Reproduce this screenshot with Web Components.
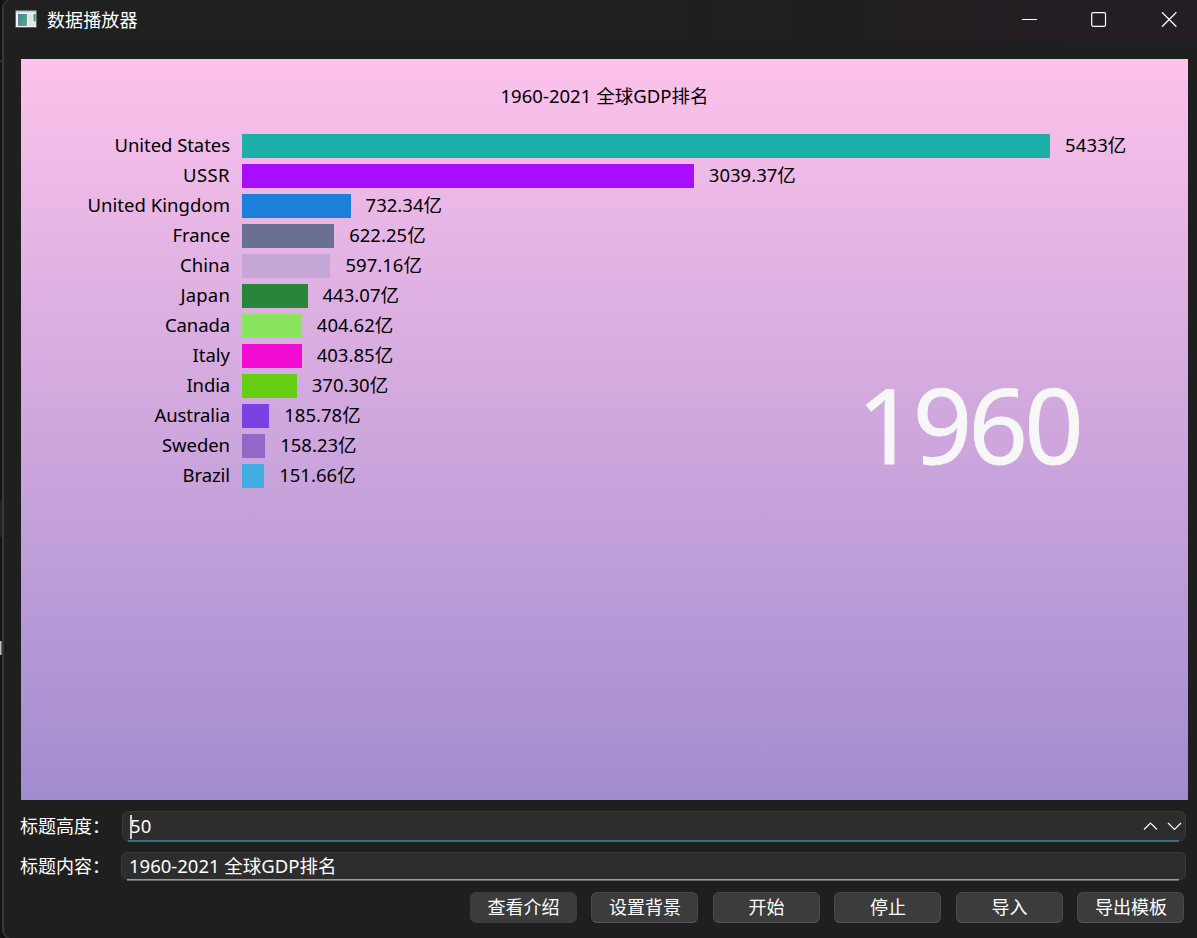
<!DOCTYPE html>
<html lang="zh-CN">
<head>
<meta charset="utf-8">
<title>数据播放器</title>
<style>
html, body { margin: 0; height: 100%; background: #141414; overflow: hidden; }
body { font: 18px/24px "Noto Sans", "Noto Sans CJK SC", sans-serif; color: #fff; }
</style>
</head>
<body>
<player-window></player-window>
<script>
const define = (name, html, setup) => customElements.define(name, class extends HTMLElement {
  constructor() {
    super();
    this.attachShadow({ mode: 'open' });
  }
  connectedCallback() {
    this.shadowRoot.innerHTML = typeof html === 'function' ? html(this) : html;
    if (setup) setup(this);
  }
});

/* Text set to a given advance width by adjusting its tracking. */
define('fit-text', el => `<style>
  :host { display: inline-block; white-space: pre; }
  </style><span>${el.getAttribute('text')}</span>`, el => {
  const s = el.shadowRoot.querySelector('span');
  const want = parseFloat(el.getAttribute('w'));
  if (want) {
    const natural = s.getBoundingClientRect().width;
    s.style.letterSpacing = ((want - natural) / [...el.getAttribute('text')].length) + 'px';
  }
});

define('title-bar', `<style>
  :host { display: flex; align-items: center; height: 42px; padding-left: 11px; box-sizing: border-box;
    background: linear-gradient(90deg, #202020 0 52%, #211e20 70%, #251e25 90%); }
  .icon { width: 22px; height: 18px; margin: -5px 10px 0 0; }
  fit-text { margin-top: -2px; }
  .ctl { display: flex; margin-left: auto; margin-top: -3px; padding-right: 20px; gap: 54px; }
  svg { display: block; }
  </style>
  <svg class="icon" viewBox="0 0 22 18">
    <defs><linearGradient id="g" x1="0" y1="0" x2="1" y2="1"><stop stop-color="#4b7aa8"/><stop offset="1" stop-color="#55b277"/></linearGradient></defs>
    <rect x=".3" y=".2" width="21.4" height="17.4" fill="#7c858e"/>
    <rect x="1" y="1" width="20" height="16" fill="#f2f4f5"/>
    <rect x="1" y="1" width="20" height="1.4" fill="#b8cddc"/>
    <rect x="3" y="4" width="9" height="12" fill="url(#g)"/>
    <rect x="13" y="4" width="4.6" height="7.5" fill="#e0e2e3"/>
    <rect x="18.5" y="4" width="2.3" height="7.5" fill="url(#g)"/>
    <rect x="13" y="12.5" width="8" height="3.5" fill="#e4e6e6"/>
  </svg>
  <fit-text text="数据播放器" w="90.5"></fit-text>
  <div class="ctl">
    <svg width="15" height="15"><path d="M0 7.5h15" stroke="#fff"/></svg>
    <svg width="16" height="15"><rect x=".7" y=".7" width="13.8" height="13.6" rx="1.2" fill="none" stroke="#fff" stroke-width="1.2"/></svg>
    <svg width="16" height="15"><path d="M1 .3l14.4 14.4M15.400 .3L1 14.700" stroke="#fff" stroke-width="1.3"/></svg>
  </div>`);

define('chart-row', el => `<style>
  :host { display: flex; height: 24px; align-items: center; color: #000; font-size: 18.5px; }
  .name { width: 209px; text-align: right; margin-right: 11.600px; white-space: nowrap; }
  .bar { height: 24px; background: ${el.getAttribute('color')}; width: ${el.getAttribute('value') * 0.1488}px; margin-right: 15px; }
  fit-text { transform: translateY(-1px); }
  </style>
  <span class="name"><fit-text text="${el.getAttribute('name')}" w="${el.getAttribute('nw')}"></fit-text></span>
  <span class="bar"></span>
  <fit-text text="${el.getAttribute('value')}亿" w="${el.getAttribute('vw')}"></fit-text>`);

const rows = [
  ['United States', '5433', '#1cb0a9', 115.5, 61.5],
  ['USSR', '3039.37', '#a80dff', 47, 87],
  ['United Kingdom', '732.34', '#1c7fd9', 142.5, 76.5],
  ['France', '622.25', '#6a7093', 57.5, 76.5],
  ['China', '597.16', '#c6a8d8', 50, 76.5],
  ['Japan', '443.07', '#28863b', 49.5, 76.5],
  ['Canada', '404.62', '#8ae45f', 65, 76.5],
  ['Italy', '403.85', '#f20bd3', 37.5, 76.5],
  ['India', '370.30', '#65cd12', 43.5, 76.5],
  ['Australia', '185.78', '#7b41e1', 75.5, 76.5],
  ['Sweden', '158.23', '#9267c7', 68, 76.5],
  ['Brazil', '151.66', '#40aee1', 47.5, 76.5],
];

define('race-chart', `<style>
  :host { display: block; position: relative; height: 741px; box-sizing: border-box; padding-top: 25px;
    background: linear-gradient(#fcc2eb, #a18cd0); }
  .title { text-align: center; color: #000; height: 24px; margin-bottom: 26px; font-size: 18.5px; }
  .rows { display: grid; gap: 6px; }
  .year { position: absolute; left: 836px; top: 305px; font-size: 104px; line-height: 120px; color: #f7f7f7; -webkit-text-stroke: .8px #f7f7f7; }
  </style>
  <div class="title"><fit-text text="1960-2021 全球GDP排名" w="208"></fit-text></div>
  <div class="rows">${rows.map(r => `<chart-row name="${r[0]}" value="${r[1]}" color="${r[2]}" nw="${r[3]}" vw="${r[4]}"></chart-row>`).join('')}</div>
  <div class="year"><fit-text text="1960" w="223"></fit-text></div>`);

define('text-field', el => `<style>
  :host { display: flex; align-items: center; }
  .label { width: 100px; }
  .label fit-text { transform: translateX(-1px); }
  .box { flex: 1; display: flex; align-items: center; box-sizing: border-box; height: ${el.hasAttribute('spin') ? 30 : 28}px;
    background: #2d2d2d; border: 1px solid #393939; border-radius: 6px; padding-left: 7px; position: relative; margin-left: ${el.hasAttribute('spin') ? 1 : 0}px; font-size: 18.5px; }
  .box::after { content: ""; position: absolute; left: 5px; right: 6px; bottom: -2px; height: 2px;
    background: ${el.hasAttribute('spin') ? '#35708b' : 'linear-gradient(#9a9a9a 50%, #666 50%)'}; }
  .caret { position: absolute; left: 7px; top: 3px; width: 2px; height: 24px; background: #d0d0d0; }
  svg { margin-left: auto; margin-right: 3px; }
  </style>
  <span class="label"><fit-text text="${el.getAttribute('label')}" w="90"></fit-text></span>
  <div class="box"><fit-text text="${el.getAttribute('value')}" w="${el.getAttribute('vw')}"></fit-text>
  ${el.hasAttribute('spin') ? `<span class="caret"></span><svg width="39" height="12" fill="none" stroke="#fff" stroke-width="1.2"><path d="M1 9.500L7.500 3l6.500 6.500M25 3l6.500 6.500L38 3"/></svg>` : ''}</div>`);

define('push-button', el => `<style>
  :host { display: flex; align-items: center; justify-content: center; width: 107px; height: 31px; box-sizing: border-box; padding-bottom: 1px;
    background: #3c3c3c; border: 1px solid ${el.hasAttribute('flat') ? '#3c3c3c' : '#4a4a4a'}; border-bottom-color: ${el.hasAttribute('flat') ? '#3c3c3c' : '#585858'}; border-radius: 6px; }
  </style><slot></slot>`);

define('player-window', `<style>
  :host { display: block; width: 1197px; height: 938px; box-sizing: border-box; padding-left: 2px; overflow: hidden;
    background: linear-gradient(#bdbdbd, #bdbdbd) 0 641px / 1px 14px no-repeat,
      linear-gradient(#9a6724, #9a6724) 1px 641px / 1px 14px no-repeat,
      linear-gradient(#333, #333) 0 60px / 2px 2px no-repeat,
      linear-gradient(#222, #222) 0 500px / 2px 37px no-repeat, #131313; }
  .frame { box-sizing: border-box; height: 940px; margin-top: -1px; border: solid #383838; border-width: 1px 0 1px 2px;
    border-radius: 9px 0 0 9px; background: #1f1f1f; overflow: hidden; }
  .body { padding: 17px 9px 0 17px; }
  .form { display: flex; flex-direction: column; gap: 11px; padding: 11px 2px 0 0; }
  .buttons { display: flex; justify-content: flex-end; gap: 14.500px; padding: 12px 3.600px 0 0; }
  </style>
  <div class="frame">
    <title-bar></title-bar>
    <div class="body">
      <race-chart></race-chart>
      <div class="form">
        <text-field spin label="标题高度：" value="50" vw="21.5"></text-field>
        <text-field label="标题内容：" value="1960-2021 全球GDP排名" vw="207.5"></text-field>
      </div>
      <div class="buttons">
        <push-button flat>查看介绍</push-button>
        <push-button>设置背景</push-button>
        <push-button>开始</push-button>
        <push-button>停止</push-button>
        <push-button>导入</push-button>
        <push-button>导出模板</push-button>
      </div>
    </div>
  </div>`);
</script>
</body>
</html>
